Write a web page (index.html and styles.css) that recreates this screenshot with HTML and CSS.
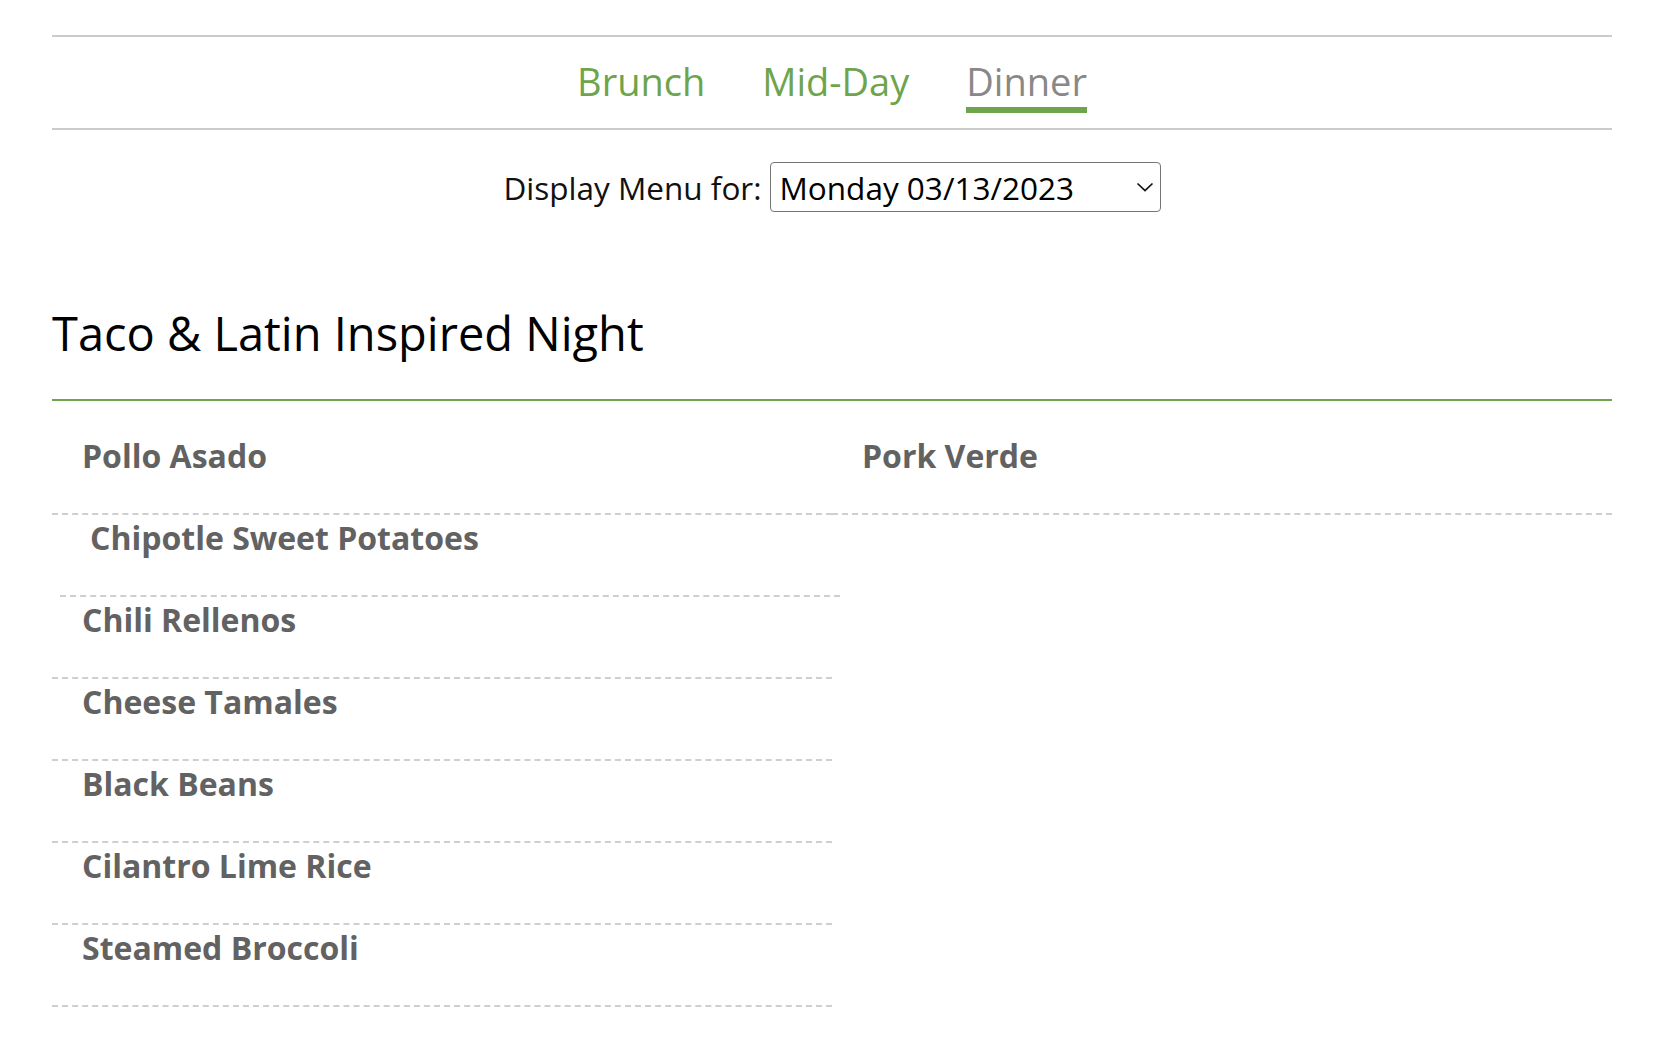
FILE: index.html
```html
<!DOCTYPE html>
<html lang="en">
<head>
<meta charset="utf-8">
<title>Dinner Menu</title>
<link rel="stylesheet" href="styles.css">
</head>
<body>
<div class="page">
  <nav class="tabs">
    <a class="tab" href="#">Brunch</a>
    <a class="tab" href="#">Mid-Day</a>
    <a class="tab tab-active" href="#">Dinner</a>
  </nav>
  <div class="date-row">
    <label class="date-label" for="day">Display Menu for:</label>
    <div class="select-wrap">
      <select id="day" class="date-select">
        <option>Monday 03/13/2023</option>
      </select>
      <svg class="chev" width="18" height="10" viewBox="0 0 18 10"><path d="M1.5 1.5 L9 8.5 L16.5 1.5" fill="none" stroke="#111" stroke-width="1.7"/></svg>
    </div>
  </div>
  <h2 class="station">Taco &amp; Latin Inspired Night</h2>
  <div class="menu">
    <div class="menu-row">
      <div class="item">Pollo Asado</div>
      <div class="item">Pork Verde</div>
    </div>
    <div class="item item-shift">Chipotle Sweet Potatoes</div>
    <div class="item">Chili Rellenos</div>
    <div class="item">Cheese Tamales</div>
    <div class="item">Black Beans</div>
    <div class="item">Cilantro Lime Rice</div>
    <div class="item">Steamed Broccoli</div>
  </div>
</div>
</body>
</html>
```
FILE: styles.css
```css
html, body {
  margin: 0;
  padding: 0;
  background: #fff;
}
body {
  font-family: "Open Sans", "Noto Sans", sans-serif;
  color: #000;
}
.page {
  margin: 0 48px 0 52px;
  padding-top: 35px;
}
.tabs {
  display: flex;
  justify-content: center;
  gap: 57px;
  border-top: 2px solid #cbcbcb;
  border-bottom: 2px solid #cbcbcb;
  padding: 18px 0 15px;
}
.tab {
  font-size: 38px;
  line-height: 52px;
  color: #6ea44c;
  text-decoration: none;
  border-bottom: 6px solid transparent;
}
.tab-active {
  color: #888;
  border-bottom-color: #6ea44c;
}
.date-row {
  display: flex;
  justify-content: center;
  align-items: center;
  gap: 8px;
  margin-top: 32px;
}
.date-label {
  font-size: 31.5px;
  color: #111;
}
.select-wrap {
  position: relative;
}
.date-select {
  appearance: none;
  -webkit-appearance: none;
  display: block;
  width: 391px;
  height: 50px;
  border: 1px solid #767676;
  border-radius: 4px;
  background: #fff;
  font-family: "Open Sans", "Noto Sans", sans-serif;
  font-size: 31.5px;
  color: #000;
  padding: 0 0 0 9px;
  margin: 0;
}
.chev {
  position: absolute;
  right: 7px;
  top: 20px;
  pointer-events: none;
}
.station {
  font-size: 47px;
  font-weight: 400;
  line-height: 65px;
  margin: 89px 0 0;
  padding-bottom: 33px;
  border-bottom: 2px solid #6ea44c;
  color: #000;
}
.menu {
  padding-top: 32px;
}
.menu-row {
  display: flex;
}
.item {
  box-sizing: border-box;
  width: 780px;
  font-size: 32px;
  font-weight: 700;
  line-height: 45px;
  color: #626262;
  padding: 0 0 35px 30px;
  border-bottom: 2px dashed #cfcfcf;
}
.item-shift {
  margin-left: 8px;
}
```
